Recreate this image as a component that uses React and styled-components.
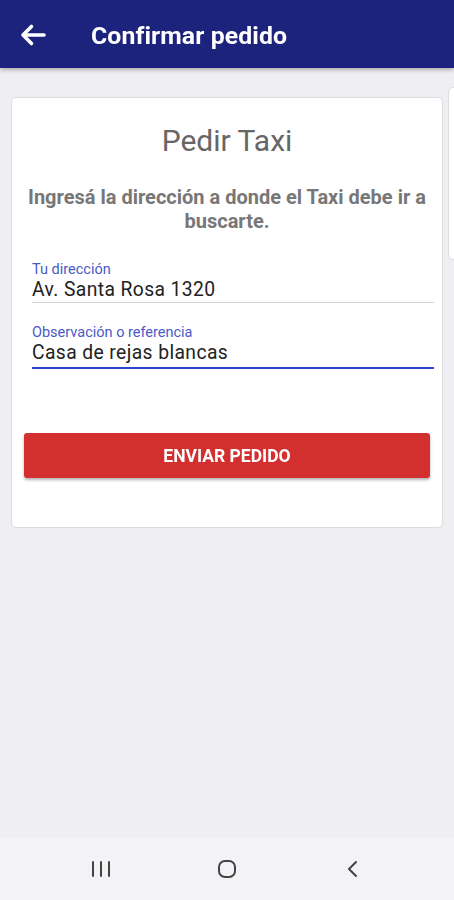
import React, { useState } from 'react'
import styled, { createGlobalStyle } from 'styled-components'

const GlobalStyle = createGlobalStyle`
  html, body {
    margin: 0;
    padding: 0;
    background: #efeff3;
    font-family: Roboto, "Noto Sans", Arial, sans-serif;
  }
  * { box-sizing: border-box; }
`

const App = () => {
  const [address, setAddress] = useState('Av. Santa Rosa 1320')
  const [note, setNote] = useState('Casa de rejas blancas')

  return (
    <React.Fragment>
      <GlobalStyle />
      <Screen>
        <AppBar>
          <BackButton aria-label="Volver">
            <svg width="28" height="24" viewBox="0 0 28 24" fill="none">
              <path d="M25 12H4M12.5 3.5L4 12l8.5 8.5" stroke="#fff" strokeWidth="3.6" strokeLinecap="round" strokeLinejoin="round" />
            </svg>
          </BackButton>
          <Title>Confirmar pedido</Title>
        </AppBar>

        <Content>
          <Pager>
            <Card>
              <Heading>Pedir Taxi</Heading>
              <Lead>Ingresá la dirección a donde el Taxi debe ir a buscarte.</Lead>

              <Field>
                <Label>Tu dirección</Label>
                <Input value={address} onChange={(e) => setAddress(e.target.value)} />
              </Field>

              <Field focused>
                <Label>Observación o referencia</Label>
                <Input autoFocus value={note} onChange={(e) => setNote(e.target.value)} />
              </Field>

              <SendButton>ENVIAR PEDIDO</SendButton>
            </Card>
            <PeekCard />
          </Pager>
        </Content>

        <NavBar>
          <NavIcon aria-label="Recientes">
            <svg width="22" height="20" viewBox="0 0 22 20">
              <path d="M3 3v14M11 3v14M19 3v14" stroke="#444" strokeWidth="2" strokeLinecap="round" />
            </svg>
          </NavIcon>
          <NavIcon aria-label="Inicio">
            <svg width="22" height="22" viewBox="0 0 22 22">
              <rect x="3" y="3" width="16" height="16" rx="6" fill="none" stroke="#444" strokeWidth="2" />
            </svg>
          </NavIcon>
          <NavIcon aria-label="Atrás">
            <svg width="20" height="22" viewBox="0 0 20 22">
              <path d="M13 4L6 11l7 7" fill="none" stroke="#444" strokeWidth="2" strokeLinecap="round" strokeLinejoin="round" />
            </svg>
          </NavIcon>
        </NavBar>
      </Screen>
    </React.Fragment>
  )
}

export default App

const Screen = styled.div`
  width: 454px;
  height: 900px;
  display: flex;
  flex-direction: column;
  overflow: hidden;
`

const AppBar = styled.header`
  height: 68px;
  flex-shrink: 0;
  display: flex;
  align-items: center;
  padding: 2px 0 0 19px;
  gap: 44px;
  background: #1b237c;
  box-shadow: 0 2px 4px rgba(0, 0, 0, 0.28);
  position: relative;
  z-index: 1;
`

const BackButton = styled.button`
  display: flex;
  padding: 0;
  border: 0;
  background: none;
  cursor: pointer;
`

const Title = styled.h1`
  margin: 0;
  color: #fff;
  font-size: 24.8px;
  font-weight: 700;
  letter-spacing: 0.1px;
`

const Content = styled.main`
  flex: 1;
  padding-top: 19px;
`

const Pager = styled.div`
  display: flex;
  align-items: flex-start;
  gap: 5px;
  padding-left: 11px;
`

const Card = styled.section`
  width: 432px;
  flex-shrink: 0;
  margin-top: 10px;
  padding: 26px 12px 49px 12px;
  background: #fff;
  border: 1px solid #dcdcdf;
  border-radius: 5px;
  display: flex;
  flex-direction: column;
`

const PeekCard = styled.div`
  width: 40px;
  height: 173px;
  flex-shrink: 0;
  background: #fff;
  border: 1px solid #dcdcdf;
  border-radius: 5px;
`

const Heading = styled.h2`
  margin: 0 0 27px;
  text-align: center;
  color: #666;
  font-size: 30px;
  font-weight: 400;
  line-height: 34px;
`

const Lead = styled.p`
  margin: 0 0 24px;
  text-align: center;
  color: #777;
  font-size: 20px;
  font-weight: 700;
  line-height: 24px;
`

const Field = styled.label`
  display: flex;
  flex-direction: column;
  margin: 0 -4px 17px 8px;
  padding-top: 4px;
  padding-bottom: ${(props) => (props.focused ? '2px' : '0')};
  border-bottom: ${(props) => (props.focused ? '2px solid #2a45cf' : '1.5px solid #d2d2d4')};
`

const Label = styled.span`
  color: #4a5ac8;
  font-size: 14.5px;
  line-height: 17px;
`

const Input = styled.input`
  border: 0;
  outline: none;
  padding: 0;
  background: transparent;
  color: #222;
  caret-color: #222;
  font-family: Roboto, "Noto Sans", Arial, sans-serif;
  font-size: 19.3px;
  letter-spacing: 0.4px;
  line-height: 24px;
  height: 24px;
`

const SendButton = styled.button`
  margin: 47px 0 0 0;
  height: 45px;
  border: 0;
  border-radius: 3px;
  background: #d32f2f;
  color: #fff;
  font-family: Roboto, "Noto Sans", Arial, sans-serif;
  font-size: 17.5px;
  font-weight: 700;
  box-shadow: 0 2px 3px rgba(0, 0, 0, 0.3);
  cursor: pointer;
`

const NavBar = styled.nav`
  height: 62px;
  flex-shrink: 0;
  display: flex;
  align-items: center;
  justify-content: center;
  gap: 104px;
  background: #f3f3f5;
`

const NavIcon = styled.button`
  display: flex;
  padding: 0;
  border: 0;
  background: none;
  width: 22px;
  justify-content: center;
`
